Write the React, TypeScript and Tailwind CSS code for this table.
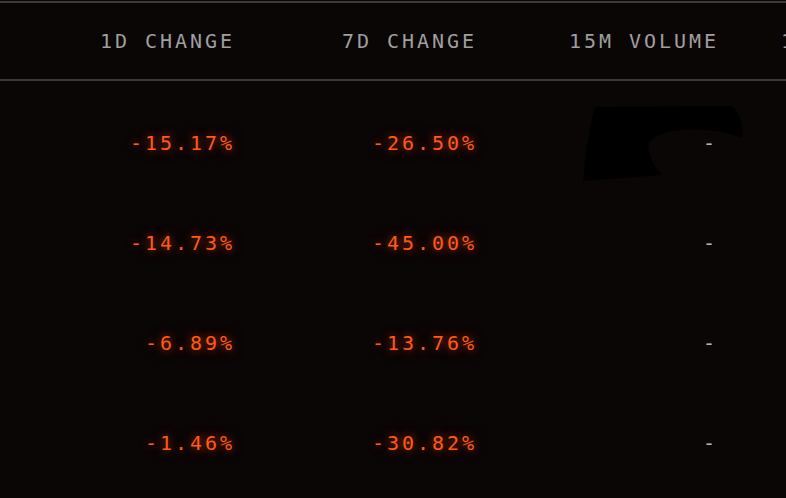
const rows = [
  { d1: "-15.17%", d7: "-26.50%", vol: "-" },
  { d1: "-14.73%", d7: "-45.00%", vol: "-" },
  { d1: "-6.89%", d7: "-13.76%", vol: "-" },
  { d1: "-1.46%", d7: "-30.82%", vol: "-" },
];

const glow =
  "text-[#ff5a16] [text-shadow:0_0_8px_rgba(255,80,10,0.65),0_0_22px_rgba(255,60,0,0.22)]";

export default function App() {
  return (
    <div className="relative h-[498px] w-[786px] overflow-hidden bg-[#0a0606] pt-px font-['DejaVu_Sans_Mono',monospace] text-[20px] tracking-[2.96px]">
      {/* header */}
      <div className="flex h-[80px] items-center border-y-2 border-[#3b3a3a] whitespace-nowrap text-[#a09f9f]">
        <div className="w-[235px] shrink-0 text-right">1D CHANGE</div>
        <div className="w-[242px] shrink-0 text-right">7D CHANGE</div>
        <div className="w-[242px] shrink-0 text-right">15M VOLUME</div>
        <div className="shrink-0 pl-[62px]">1H VOLUME</div>
      </div>

      {/* rows */}
      <div className="pt-[12px]">
        {rows.map((r, i) => (
          <div key={i} className="flex h-[100px] items-center whitespace-nowrap">
            <div className={`w-[235px] shrink-0 text-right ${glow}`}>{r.d1}</div>
            <div className={`w-[242px] shrink-0 text-right ${glow}`}>{r.d7}</div>
            <div className="w-[242px] shrink-0 pr-[1px] text-right text-[#b5b3b3] [text-shadow:0_0_6px_rgba(255,255,255,0.15)]">
              {r.vol}
            </div>
          </div>
        ))}
      </div>

      {/* redaction mark over the first volume cell */}
      <svg
        className="absolute left-[570px] top-[95px]"
        width="180"
        height="95"
        viewBox="0 0 180 95"
      >
        <path
          d="M25 12 L160 11 Q171 13 173 43 Q140 31 102 36 Q79 41 78 52 Q81 70 92 80 L13 86 Q17 40 25 12 Z"
          fill="#000"
        />
      </svg>
    </div>
  );
}
